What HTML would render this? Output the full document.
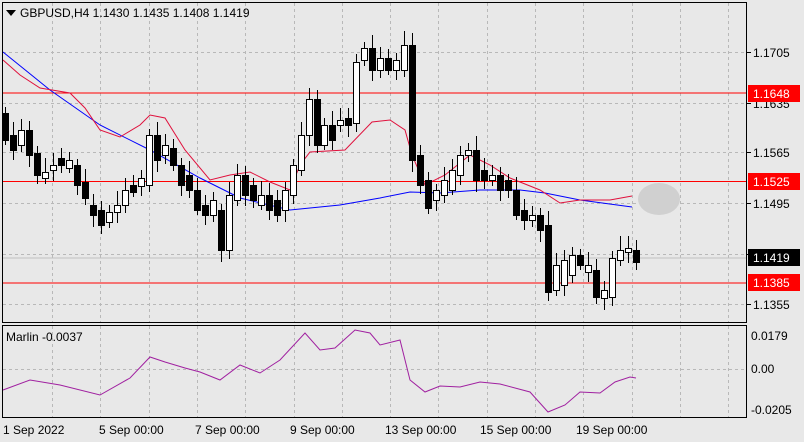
<!DOCTYPE html>
<html><head><style>
body{margin:0;width:804px;height:442px;background:#e8e8e8;overflow:hidden;font-family:"Liberation Sans",sans-serif}
svg{position:absolute;left:0;top:0}
text{font-family:"Liberation Sans",sans-serif;font-size:12px;fill:#000}
</style></head><body>
<svg id="s" width="804" height="442" xmlns="http://www.w3.org/2000/svg">
<rect width="804" height="442" fill="#e8e8e8"/>
<g id="grid" stroke="#b8b8b8" stroke-dasharray="3,3" stroke-width="1"></g>
<line x1="2" x2="747" y1="258" y2="258" stroke="#c0c0c0"/>
<line x1="2" x2="747" y1="93" y2="93" stroke="#f00"/>
<line x1="2" x2="747" y1="181.5" y2="181.5" stroke="#f00"/>
<line x1="2" x2="747" y1="283" y2="283" stroke="#f00"/>
<ellipse cx="659" cy="199" rx="21" ry="16" fill="#d0d0d0"/>
<polyline fill="none" stroke="#00f" points="3,52 50,90 100,125 150,150 200,178 240,198 290,210 340,205 380,198 410,192 440,193 480,190 520,190 545,193 580,200 632,207"/>
<polyline fill="none" stroke="#e0103c" points="3,60 20,75 40,88 70,93 85,108 100,130 120,137 140,125 150,115 165,118 185,150 210,180 230,175 250,172 270,182 290,190 300,165 310,152 345,150 372,122 390,120 405,130 412,155 425,185 445,175 470,155 490,165 510,178 540,190 560,203 580,200 610,200 632,196"/>
<g id="c"></g>
<polyline fill="none" stroke="#a020a0" points="3,390 30,380 60,385 100,395 130,378 150,357 165,362 185,368 200,372 220,380 240,365 260,373 280,360 305,333 320,350 335,348 355,330 370,333 380,345 400,340 410,380 425,392 440,386 460,387 480,382 500,384 530,392 548,412 565,405 580,392 600,393 615,382 630,377 636,378"/>
<rect x="2.5" y="2.5" width="744" height="320" fill="none" stroke="#000"/>
<rect x="2.5" y="325.5" width="744" height="92" fill="none" stroke="#000"/>
<path d="M6,10 L16,10 L11,16Z" fill="#000"/>
<text x="20" y="17">GBPUSD,H4  1.1430 1.1435 1.1408 1.1419</text>
<text x="6" y="341">Marlin -0.0037</text>
<g id="ax"></g>
<rect x="748" y="85" width="52" height="17" fill="#f00"/><text x="753" y="98" style="fill:#fff">1.1648</text>
<rect x="748" y="173" width="52" height="17" fill="#f00"/><text x="753" y="186" style="fill:#fff">1.1525</text>
<rect x="748" y="274" width="52" height="17" fill="#f00"/><text x="753" y="287" style="fill:#fff">1.1385</text>
<rect x="748" y="249" width="52" height="17" fill="#000"/><text x="753" y="262" style="fill:#fff">1.1419</text>
<text x="3" y="434">1 Sep 2022</text><text x="99" y="434">5 Sep 00:00</text><text x="195" y="434">7 Sep 00:00</text><text x="290" y="434">9 Sep 00:00</text><text x="385" y="434">13 Sep 00:00</text><text x="480" y="434">15 Sep 00:00</text><text x="576" y="434">19 Sep 00:00</text>
</svg>
<script>
var N="http://www.w3.org/2000/svg";
function el(p,t,a){var e=document.createElementNS(N,t);for(var k in a)e.setAttribute(k,a[k]);document.getElementById(p).appendChild(e);return e;}
for(var x=52;x<747;x+=48.3){el("grid","line",{x1:Math.round(x)+.5,x2:Math.round(x)+.5,y1:3,y2:322});el("grid","line",{x1:Math.round(x)+.5,x2:Math.round(x)+.5,y1:326,y2:417});}
[52,103,152,203,254,304].forEach(function(y){el("grid","line",{x1:3,x2:746,y1:y+.5,y2:y+.5});el("ax","line",{x1:747,x2:751,y1:y+.5,y2:y+.5,stroke:"#000"});});
[["1.1705",52],["1.1635",103],["1.1565",152],["1.1495",203],["1.1355",304]].forEach(function(a){var t=el("ax","text",{x:753,y:a[1]+5});t.textContent=a[0];});
[[369]].forEach(function(y){el("grid","line",{x1:3,x2:746,y1:369.5,y2:369.5});});
[["0.0179",340],["0.00",373],["-0.0205",414]].forEach(function(a){var t=el("ax","text",{x:751,y:a[1]});t.textContent=a[0];});
// [w/b, top, bottom]
var C=[["b",113,140],["b",135,150],["w",130,145],["b",130,155],["b",153,175],["w",172,178],["w",165,170],["b",158,165],["w",160,168],["b",165,185],["b",182,198],["b",205,215],["b",210,225],["w",212,222],["w",205,212],["w",190,205],["b",185,192],["w",178,186],["w",135,185],["b",135,160],["w",145,155],["b",148,165],["b",165,185],["b",175,190],["b",190,210],["b",205,215],["w",200,215],["b",210,250],["w",195,250],["w",175,200],["b",175,195],["b",185,200],["w",195,205],["b",195,210],["b",200,215],["w",190,210],["w",165,195],["w",135,170],["w",99,135],["b",99,145],["w",125,145],["b",125,140],["w",120,125],["b",118,125],["w",62,123],["w",48,60],["b",48,70],["w",58,70],["b",58,70],["w",60,70],["w",45,70],["b",45,160],["b",155,185],["b",180,208],["w",190,200],["w",180,195],["w",170,190],["w",155,175],["w",150,155],["b",150,180],["b",170,180],["w",175,180],["b",175,190],["b",180,190],["b",190,215],["b",210,220],["w",215,220],["b",215,230],["b",225,292],["w",265,290],["w",260,285],["w",255,275],["b",255,265],["w",265,272],["b",270,297],["w",290,298],["w",258,297],["w",250,260],["w",248,252],["b",250,262]];
var dx=(636-5)/(C.length-1);
C.forEach(function(c,i){var x=Math.round(5+dx*i)+.5;var h=Math.max(3,c[2]-c[1]);
el("c","line",{x1:x,x2:x,y1:c[1]-6-(i*7%9),y2:c[1]+h+5+(i*5%8),stroke:"#000"});
el("c","rect",{x:x-3,y:c[1]+.5,width:6,height:h,fill:c[0]=="w"?"#fff":"#000",stroke:"#000"});});
</script>
</body></html>
